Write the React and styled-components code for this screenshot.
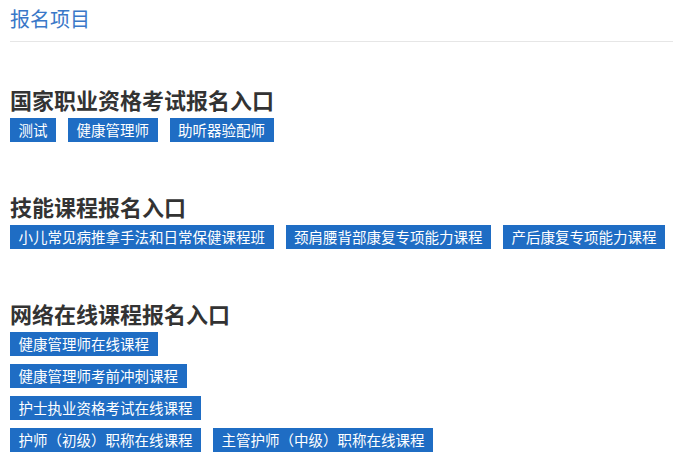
import React from 'react'
import styled, { createGlobalStyle } from "styled-components";

const GlobalStyle = createGlobalStyle`
  html, body {
    margin: 0;
    padding: 0;
    background: #fff;
    font-family: "Microsoft YaHei", "Noto Sans CJK SC", "Noto Sans", sans-serif;
  }
`;

const sections = [
  {
    title: "国家职业资格考试报名入口",
    rows: [["测试", "健康管理师", "助听器验配师"]],
  },
  {
    title: "技能课程报名入口",
    rows: [["小儿常见病推拿手法和日常保健课程班", "颈肩腰背部康复专项能力课程", "产后康复专项能力课程"]],
  },
  {
    title: "网络在线课程报名入口",
    rows: [
      ["健康管理师在线课程"],
      ["健康管理师考前冲刺课程"],
      ["护士执业资格考试在线课程"],
      ["护师（初级）职称在线课程", "主管护师（中级）职称在线课程"],
    ],
  },
];

const App = () => {
  return (
    <>
      <GlobalStyle />
      <Page>
        <Header>
          <HeaderTitle>报名项目</HeaderTitle>
        </Header>
        {sections.map((s, idx) => (
          <Section key={s.title} $first={idx === 0}>
            <SectionTitle>{s.title}</SectionTitle>
            <TagList>
              {s.rows.map((row, i) => (
                <TagRow key={i}>
                  {row.map((t) => (
                    <Tag key={t} href="#">{t}</Tag>
                  ))}
                </TagRow>
              ))}
            </TagList>
          </Section>
        ))}
      </Page>
    </>
  )
}

export default App

const Page = styled.div`
  padding-left: 10px;
`;

const Header = styled.div`
  height: 42px;
  border-bottom: solid 1px #e6e6e6;
  box-sizing: border-box;
  padding-top: 4px;
`;

const HeaderTitle = styled.h2`
  margin: 0;
  font-size: 20px;
  line-height: 30px;
  font-weight: normal;
  color: #3a78c8;
`;

const Section = styled.div`
  padding-top: ${(p) => (p.$first ? "41px" : "48px")};
`;

const SectionTitle = styled.h3`
  margin: 0;
  font-size: 22px;
  line-height: 32px;
  font-weight: bold;
  color: #333;
`;

const TagList = styled.div`
  display: flex;
  flex-direction: column;
  gap: 8px;
  margin-top: 3px;
`;

const TagRow = styled.div`
  display: flex;
  gap: 12px;
`;

const Tag = styled.a`
  display: inline-block;
  height: 24px;
  line-height: 24px;
  padding: 0 8.5px;
  font-size: 14.5px;
  color: #fff;
  background: #1f6dc4;
  text-decoration: none;
  white-space: nowrap;
`;
